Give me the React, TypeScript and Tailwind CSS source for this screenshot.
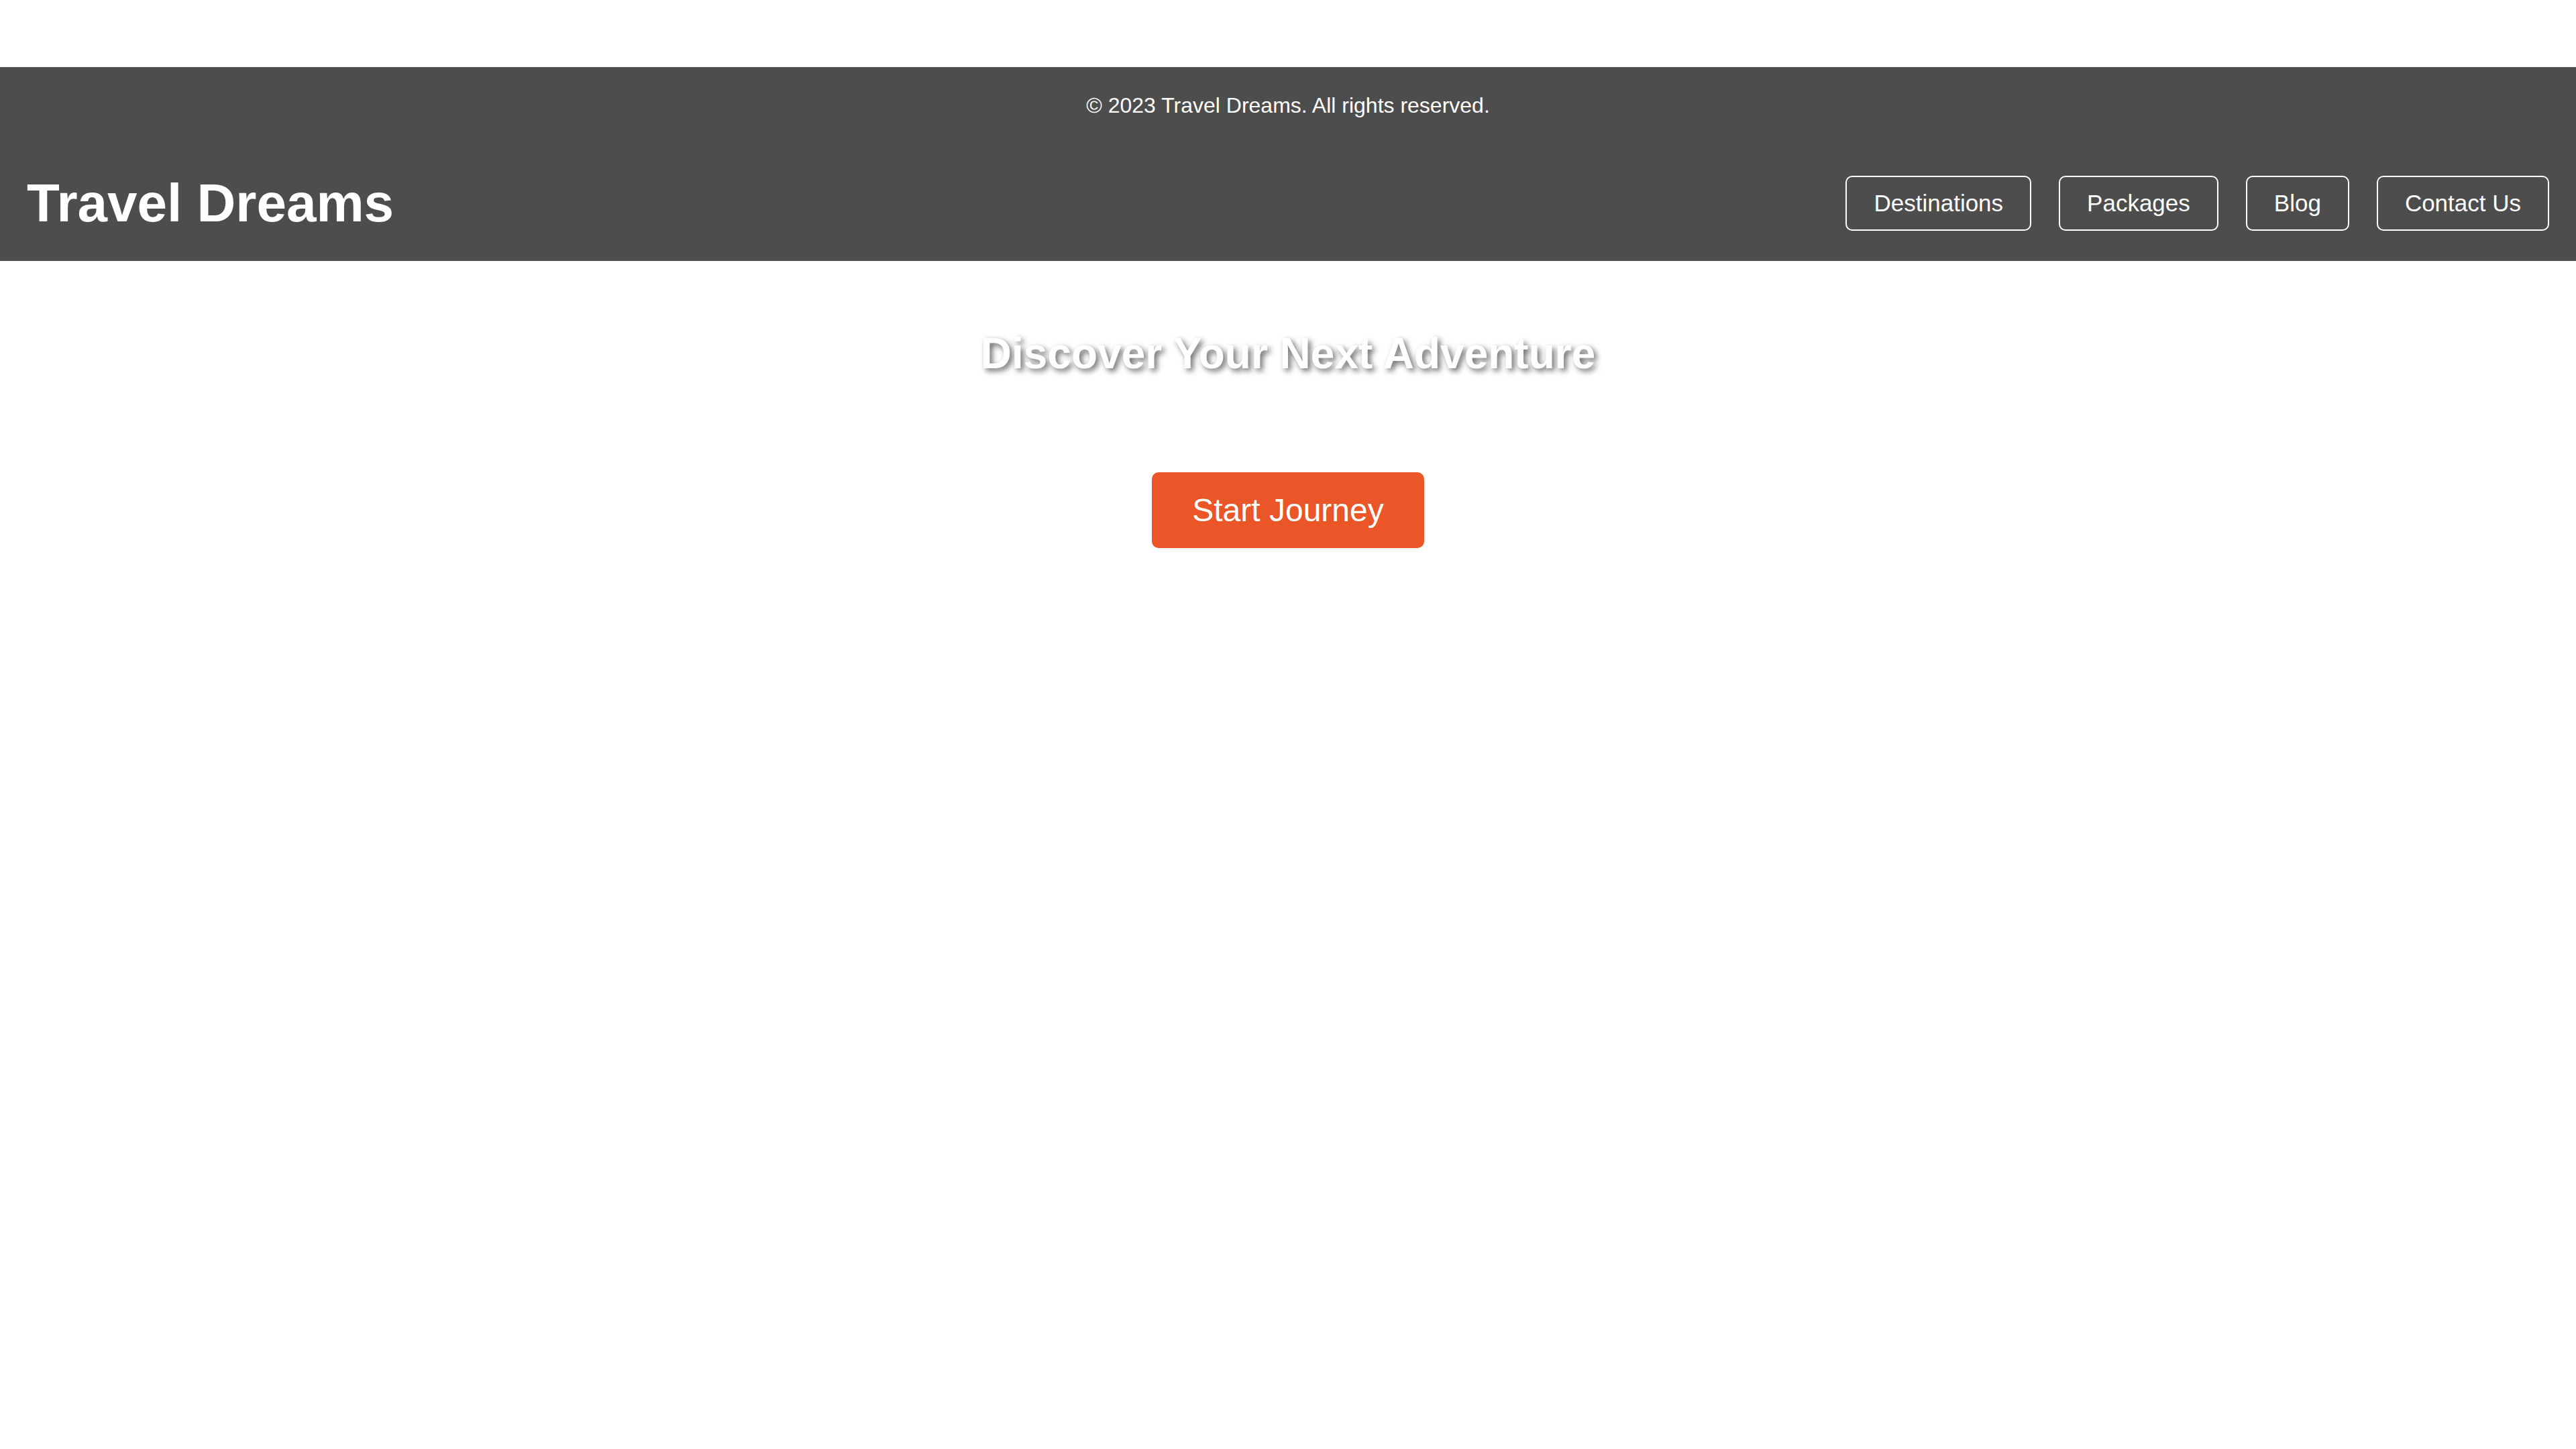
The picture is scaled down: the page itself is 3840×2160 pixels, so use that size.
import React from "react";

export default function App() {
  const nav = ["Destinations", "Packages", "Blog", "Contact Us"];
  return (
    <div className="min-h-screen bg-white pt-[100px] font-['Liberation_Sans',Arial,sans-serif]">
      <header className="bg-[#4d4d4d] px-[40px] pt-[39px] pb-[40px] text-white">
        <p className="text-center text-[32px] leading-[37px]">© 2023 Travel Dreams. All rights reserved.</p>
        <div className="mt-[81px] flex items-center justify-between">
          <h1 className="text-[80px] font-bold leading-[92px]">Travel Dreams</h1>
          <nav className="flex items-center gap-[41px]">
            {nav.map((n) => (
              <a
                key={n}
                href="#"
                className="rounded-[10px] border-2 border-white px-[40px] py-[19px] text-[35px] leading-[40px] text-white"
              >
                {n}
              </a>
            ))}
          </nav>
        </div>
      </header>
      <section className="flex flex-col items-center">
        <h2 className="mt-[101px] text-[64px] font-bold leading-[74px] text-white [text-shadow:4px_4px_8px_rgba(0,0,0,0.6)]">
          Discover Your Next Adventure
        </h2>
        <button className="mt-[140px] rounded-[10px] bg-[#eb5628] px-[60px] py-[29px] text-[48px] leading-[55px] text-white">
          Start Journey
        </button>
      </section>
    </div>
  );
}
